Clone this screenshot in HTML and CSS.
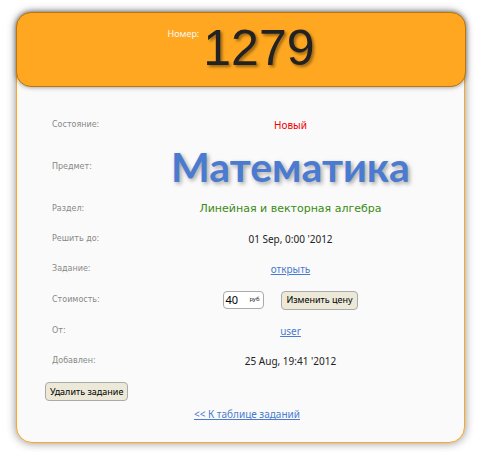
FILE: index.html
```html
<!DOCTYPE html>
<html lang="ru">
<head>
<meta charset="utf-8">
<title>Задание 1279</title>
<link rel="stylesheet" href="styles.css">
</head>
<body>
<main class="card">
  <header class="card-header">
    <span class="number-label">Номер:</span>
    <h1 class="number">1279</h1>
  </header>
  <form class="task">
    <dl class="details">
      <div class="row"><dt>Состояние:</dt><dd class="status">Новый</dd></div>
      <div class="row row-subject"><dt>Предмет:</dt><dd class="subject">Математика</dd></div>
      <div class="row"><dt>Раздел:</dt><dd class="section">Линейная и векторная алгебра</dd></div>
      <div class="row"><dt>Решить до:</dt><dd>01 Sep, 0:00 '2012</dd></div>
      <div class="row"><dt>Задание:</dt><dd><a href="#task">открыть</a></dd></div>
      <div class="row row-price">
        <dt><label for="price">Стоимость:</label></dt>
        <dd class="price">
          <span class="price-box"><input id="price" type="text" value="40"><span class="unit">руб</span></span>
          <button type="button">Изменить цену</button>
        </dd>
      </div>
      <div class="row"><dt>От:</dt><dd><a href="#user">user</a></dd></div>
      <div class="row"><dt>Добавлен:</dt><dd>25 Aug, 19:41 '2012</dd></div>
    </dl>
    <button class="delete" type="button">Удалить задание</button>
  </form>
  <a class="back" href="#tasks">&lt;&lt; К таблице заданий</a>
</main>
</body>
</html>
```
FILE: styles.css
```css
* {
  box-sizing: border-box;
}

body {
  margin: 0;
  padding: 12px 15px 9px 16px;
  background: #fff;
  color: #222;
  font: 10px/14px "Noto Sans", sans-serif;
}

.card {
  display: flex;
  flex-direction: column;
  padding-bottom: 21px;
  border: 1px solid #ffa720;
  border-radius: 16px;
  background: #fafafa;
  box-shadow: 0 0 10px rgba(0, 0, 0, 0.45);
}

.card-header {
  display: flex;
  justify-content: center;
  gap: 4px;
  margin: -1px -2px 0 -1px;
  height: 75px;
  padding-top: 5px;
  border: 1px solid #b87512;
  border-radius: 15px;
  background: #ffa720;
  box-shadow: 0 0 5px rgba(0, 0, 0, 0.45);
}

.number-label {
  padding-top: 9px;
  color: #fafafa;
  font-size: 9px;
}

.number {
  margin: 0;
  font: 50px/60px "Liberation Sans", sans-serif;
  text-shadow: 2px 2px 3px rgba(0, 0, 0, 0.4);
}

.task {
  padding: 23px 12px 0 28px;
}

.details {
  margin: 0;
}

.row {
  display: flex;
  align-items: center;
  min-height: 30px;
}

.row-subject {
  min-height: 54px;
}

.row-price {
  min-height: 32px;
}

dt {
  flex: 0 0 84px;
  padding-left: 7px;
  color: #888;
  font: 8px/12px "DejaVu Sans", sans-serif;
}

dd {
  flex: 1;
  margin: 0;
  text-align: center;
}

a {
  color: #4a7bd0;
}

.status {
  color: #e00;
}

.subject {
  color: #4a7bd0;
  font: bold 41px/48px Lato, sans-serif;
  text-shadow: 2px 2px 4px rgba(0, 0, 0, 0.35);
}

.section {
  color: #3c8a14;
  font-family: "DejaVu Sans", sans-serif;
  font-size: 11px;
}

.price {
  display: flex;
  justify-content: center;
  gap: 17px;
}

.price-box {
  display: flex;
  width: 41px;
  height: 18px;
  border: 1px solid #aaa;
  border-radius: 4px;
  background: #fff;
}

input {
  width: 25px;
  padding: 0 1px;
  border: 0;
  background: none;
  color: #000;
  font: 11px/16px "Noto Sans", sans-serif;
}

.unit {
  color: #222;
  font-size: 6px;
}

button {
  height: 19px;
  padding: 0 4px;
  border: 1px solid #aaa;
  border-radius: 4px;
  background: #ece9d8;
  color: #000;
  font: 9px/16px "Noto Sans", sans-serif;
}

.delete {
  display: block;
  margin-top: 6px;
}

.back {
  align-self: center;
  margin: 6px 0 0 13px;
}
```
